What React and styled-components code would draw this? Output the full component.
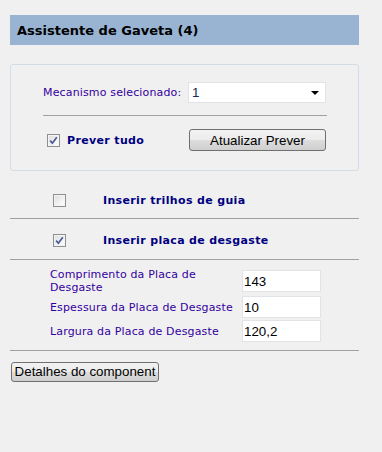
import React from "react";
import styled, { createGlobalStyle } from "styled-components";

const Global = createGlobalStyle`
  html, body { margin: 0; padding: 0; background: #f0f0f0; }
  body { font-family: "DejaVu Sans", Verdana, sans-serif; }
`;

const Page = styled.div`
  width: 349px;
  padding: 15px 0 0 10px;
`;

const Header = styled.div`
  height: 30px;
  background: #98b4d2;
  display: flex;
  align-items: center;
  padding-left: 7px;
  font: bold 13px "DejaVu Sans", Verdana, sans-serif;
  color: #000;
`;

const Panel = styled.div`
  margin-top: 19px;
  border: 1px solid #d3dde7;
  border-radius: 3px;
  padding: 17px 31px 19px 32px;
  box-sizing: border-box;
`;

const Row = styled.div`
  display: flex;
  align-items: center;
  width: 283px;
`;

const Label = styled.span`
  font-size: 11px;
  line-height: 13px;
  color: ${(p) => (p.bold ? "#000080" : "#3300a0")};
  font-weight: ${(p) => (p.bold ? "bold" : "normal")};
  letter-spacing: ${(p) => (p.bold ? "0.35px" : "0.15px")};
`;

const Select = styled.div`
  margin-left: auto;
  width: 138px;
  height: 21px;
  box-sizing: border-box;
  background: #fff;
  border: 1px solid #e2e3e6;
  display: flex;
  align-items: center;
  padding: 0 6px 0 3px;
  font: 13.33px "Liberation Sans", Arial, sans-serif;
  color: #1b2a55;
`;

const Arrow = styled.span`
  margin-left: auto;
  width: 0;
  height: 0;
  border-left: 4px solid transparent;
  border-right: 4px solid transparent;
  border-top: 4px solid #000;
`;

const Sep = styled.div`
  height: 0;
  border-top: 1px solid #a0a0a0;
  margin: ${(p) => p.margin || "0"};
  width: ${(p) => p.width || "auto"};
`;

const Box = styled.span`
  width: 13px;
  height: 13px;
  box-sizing: border-box;
  border: 1px solid #8e8f8f;
  background: linear-gradient(135deg, #dcdcdc 0%, #f6f6f6 70%, #ffffff 100%);
  box-shadow: inset 0 0 0 1px #f4f4f4;
  display: inline-flex;
  align-items: center;
  justify-content: center;
  flex: none;
  margin-left: ${(p) => p.left || "0"};
`;

const Check = ({ checked, left }) => (
  <Box left={left}>
    {checked && (
      <svg width="9" height="9" viewBox="0 0 9 9">
        <path d="M1.2 4.6 L3.4 7.2 L7.8 1.2" fill="none" stroke="#4a5a95" strokeWidth="1.7" />
      </svg>
    )}
  </Box>
);

const Button = styled.button`
  height: ${(p) => p.h || "22px"};
  width: ${(p) => p.w};
  margin-left: ${(p) => p.ml || "0"};
  box-sizing: border-box;
  border: 1px solid #707070;
  border-radius: 3px;
  background: linear-gradient(#f2f2f2 0%, #ebebeb 50%, #dddddd 51%, #cfcfcf 100%);
  font: 13.33px "Liberation Sans", Arial, sans-serif;
  color: #000;
  padding: 0;
  white-space: nowrap;
  overflow: hidden;
`;

const OptionRow = styled.div`
  height: 40px;
  box-sizing: border-box;
  display: flex;
  align-items: center;
  padding-left: 43px;
  padding-top: ${(p) => p.pt || "0"};
  margin-top: ${(p) => p.mt || "0"};
`;

const OptLabel = styled(Label)`
  margin-left: 37px;
`;

const Fields = styled.div`
  display: grid;
  grid-template-columns: 192px 79px;
  row-gap: 2px;
  align-items: center;
  padding: 8px 0 8px 40px;
`;

const Input = styled.div`
  height: 22px;
  box-sizing: border-box;
  border: 1px solid #e2e3e6;
  background: #fff;
  display: flex;
  align-items: center;
  padding-left: 1px;
  font: 13.33px "Liberation Sans", Arial, sans-serif;
  color: #000;
`;

const Footer = styled.div`
  padding: 10px 0 0 1px;
`;

export default function App() {
  return (
    <>
      <Global />
      <Page>
        <Header>Assistente de Gaveta (4)</Header>
        <Panel>
          <Row>
            <Label>Mecanismo selecionado:</Label>
            <Select>
              1<Arrow />
            </Select>
          </Row>
          <Sep margin="12px 0 13px 0" width="284px" />
          <Row>
            <Check checked left="4px" />
            <Label bold style={{ marginLeft: 7 }}>Prever tudo</Label>
            <Button w="137px" ml="auto">Atualizar Prever</Button>
          </Row>
        </Panel>
        <OptionRow mt="7px" pt="4px">
          <Check />
          <OptLabel bold>Inserir trilhos de guia</OptLabel>
        </OptionRow>
        <Sep />
        <OptionRow pt="2px">
          <Check checked />
          <OptLabel bold>Inserir placa de desgaste</OptLabel>
        </OptionRow>
        <Sep />
        <Fields>
          <Label>Comprimento da Placa de Desgaste</Label>
          <Input>143</Input>
          <Label>Espessura da Placa de Desgaste</Label>
          <Input>10</Input>
          <Label>Largura da Placa de Desgaste</Label>
          <Input>120,2</Input>
        </Fields>
        <Sep />
        <Footer>
          <Button w="148px" h="20px">Detalhes do component</Button>
        </Footer>
      </Page>
    </>
  );
}
